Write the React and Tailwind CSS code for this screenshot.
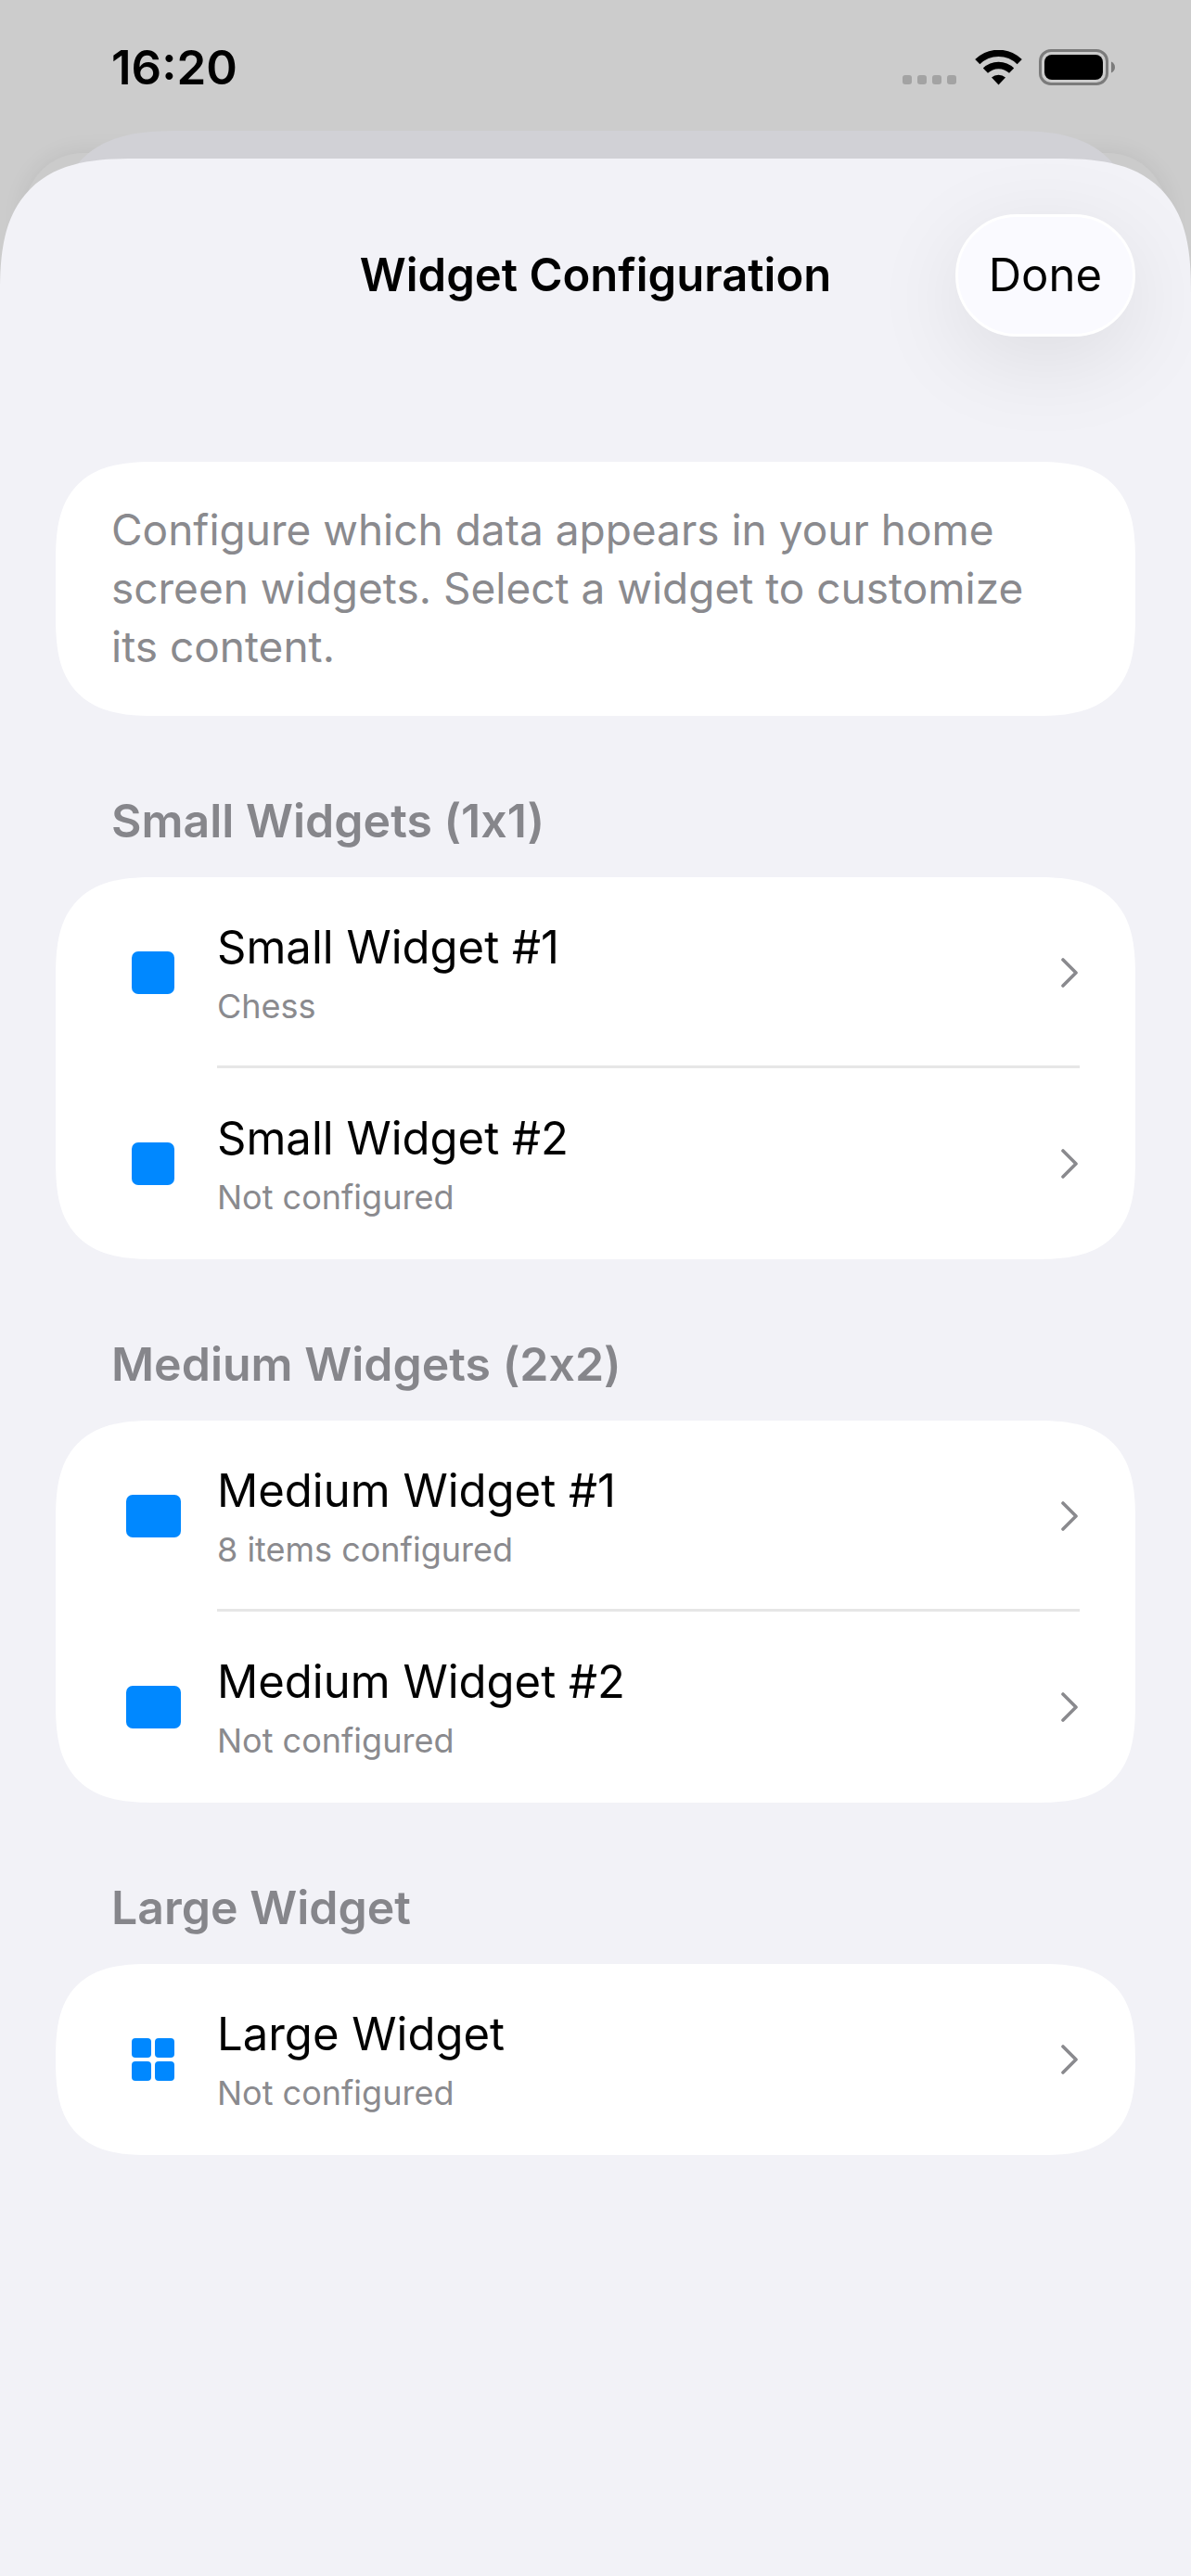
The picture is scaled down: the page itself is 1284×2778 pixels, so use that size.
import React from 'react'

const sections = [
  {
    title: 'Small Widgets (1x1)',
    widgets: [
      { id: 'small-1', name: 'Small Widget #1', status: 'Chess', size: 'small' },
      { id: 'small-2', name: 'Small Widget #2', status: 'Not configured', size: 'small' }
    ]
  },
  {
    title: 'Medium Widgets (2x2)',
    widgets: [
      { id: 'medium-1', name: 'Medium Widget #1', status: '8 items configured', size: 'medium' },
      { id: 'medium-2', name: 'Medium Widget #2', status: 'Not configured', size: 'medium' }
    ]
  },
  {
    title: 'Large Widget',
    widgets: [
      { id: 'large-1', name: 'Large Widget', status: 'Not configured', size: 'large' }
    ]
  }
]

function WifiIcon() {
  return (
    <svg width="51" height="38" viewBox="0 0 51 38" fill="none" aria-hidden="true">
      <g stroke="#000" strokeWidth="7.4">
        <path d="M2.8 12.7a32.4 32.4 0 0 1 45.4 0" />
        <path d="M11.4 22.2a20.2 20.2 0 0 1 28.2 0" />
      </g>
      <path d="M25.5 37.4 18 29.6a11 11 0 0 1 15 0z" fill="#000" />
    </svg>
  )
}

function BatteryIcon() {
  return (
    <svg width="83" height="39" viewBox="0 0 83 39" fill="none" aria-hidden="true">
      <rect x="1.5" y="1.5" width="72" height="36" rx="11.5" stroke="#7b7b7b" strokeWidth="3" />
      <rect x="6" y="6" width="63" height="27" rx="8" fill="#000" />
      <path d="M78 13.5c2.6 1.1 4 3.4 4 6s-1.4 4.9-4 6z" fill="#7b7b7b" />
    </svg>
  )
}

function StatusBar() {
  return (
    <div className="relative flex h-[141px] items-start justify-between pt-[40px] pr-[81px] pl-[120px]">
      <span className="text-[51px] leading-[66px] font-semibold">16:20</span>
      <div className="flex items-center pt-[13px]">
        <div className="mr-5 flex gap-[6px] self-end pb-px">
          <span className="size-[10px] rounded-[3px] bg-[#a3a3a3]" />
          <span className="size-[10px] rounded-[3px] bg-[#a3a3a3]" />
          <span className="size-[10px] rounded-[3px] bg-[#a3a3a3]" />
          <span className="size-[10px] rounded-[3px] bg-[#a3a3a3]" />
        </div>
        <WifiIcon />
        <div className="ml-[18px]">
          <BatteryIcon />
        </div>
      </div>
    </div>
  )
}

function WidgetIcon({ size }) {
  if (size === 'small') {
    return <span className="size-[46px] rounded-[7px] bg-[#0088ff]" />
  }
  if (size === 'medium') {
    return <span className="h-[46px] w-[59px] rounded-[7px] bg-[#0088ff]" />
  }
  return (
    <span className="grid grid-cols-2 gap-1">
      <span className="size-[21px] rounded-[4px] bg-[#0088ff]" />
      <span className="size-[21px] rounded-[4px] bg-[#0088ff]" />
      <span className="size-[21px] rounded-[4px] bg-[#0088ff]" />
      <span className="size-[21px] rounded-[4px] bg-[#0088ff]" />
    </span>
  )
}

function WidgetRow({ widget, last }) {
  return (
    <li>
      <button type="button" className="flex w-full items-stretch px-[60px] text-left">
        <span className="mr-6 flex w-[90px] items-center justify-center">
          <WidgetIcon size={widget.size} />
        </span>
        <span className="relative flex h-[206px] flex-1 items-center justify-between">
          <span className="flex flex-col gap-[6px]">
            <span className="text-[49px] leading-[66px]">{widget.name}</span>
            <span className="text-[36px] leading-[48px] text-[#8a8a8e]">{widget.status}</span>
          </span>
          <svg className="mr-[2px]" width="18" height="32" viewBox="0 0 18 32" fill="none" aria-hidden="true">
            <path
              d="M2 2l14 14L2 30"
              stroke="#8a8a8e"
              strokeWidth="3.6"
              strokeLinecap="round"
              strokeLinejoin="round"
            />
          </svg>
          {!last && <span className="absolute inset-x-0 bottom-0 h-[3px] bg-[#e6e6e6]" />}
        </span>
      </button>
    </li>
  )
}

export default function App() {
  return (
    <div className="relative flex min-h-screen flex-col overflow-hidden bg-[#cccccc] font-['Inter','Liberation_Sans',sans-serif] text-black">
      {/* Sheets stacked behind the current one */}
      <div className="absolute inset-x-[26px] top-[165px] h-[400px] rounded-t-[64px] bg-[#cbcbcb] shadow-[0_0_24px_rgba(0,0,0,0.08)]" />
      <div className="absolute inset-x-[58px] top-[141px] h-[400px] rounded-t-[136px] bg-[#d1d1d6] [corner-shape:superellipse(1.45)]" />

      <StatusBar />

      <main className="relative mt-[30px] flex-1 rounded-t-[146px] bg-[#f2f2f7] px-[60px] [corner-shape:superellipse(1.45)]">
        <header className="grid grid-cols-[1fr_auto_1fr] items-center pt-[60px]">
          <h1 className="col-start-2 text-[49px] leading-[66px] font-semibold">Widget Configuration</h1>
          <button
            type="button"
            className="h-[132px] justify-self-end rounded-[66px] border-3 border-white bg-[#fafaff] px-[33px] text-[49px] leading-[66px] shadow-[0_24px_100px_rgba(0,0,0,0.09)]"
          >
            Done
          </button>
        </header>

        <p className="mt-[135px] rounded-[108px] bg-white px-[60px] pt-[42px] pb-[43px] text-[46px] leading-[63px] text-[#8a8a8e] [corner-shape:superellipse(1.45)]">
          Configure which data appears in your home screen widgets. Select a widget to customize its content.
        </p>

        {sections.map((section) => (
          <section key={section.title} className="pt-[80px]">
            <h2 className="px-[60px] text-[50px] leading-[66px] font-semibold text-[#86868b] [font-feature-settings:'calt'_0]">
              {section.title}
            </h2>
            <ul className="mt-7 rounded-[108px] bg-white [corner-shape:superellipse(1.45)]">
              {section.widgets.map((widget, i) => (
                <WidgetRow key={widget.id} widget={widget} last={i === section.widgets.length - 1} />
              ))}
            </ul>
          </section>
        ))}
      </main>
    </div>
  )
}
